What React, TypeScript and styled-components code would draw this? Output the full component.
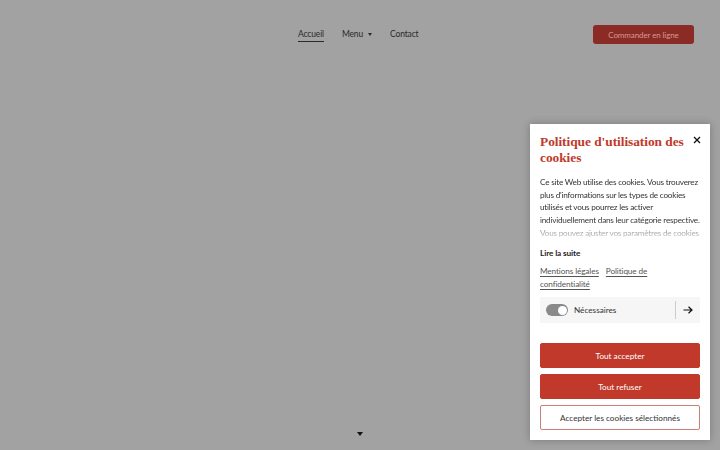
import React from "react";
import styled, { createGlobalStyle } from "styled-components";

const Global = createGlobalStyle`
  html, body { margin: 0; padding: 0; }
  body { width: 720px; height: 450px; overflow: hidden; background: #a2a2a2; }
  * { box-sizing: border-box; }
`;

const Page = styled.div`
  width: 720px;
  height: 450px;
  position: relative;
  display: flex;
  flex-direction: column;
  font-family: "Lato", "Open Sans", sans-serif;
  background: #a2a2a2;
`;

const Header = styled.header`
  display: flex;
  align-items: center;
  height: 68px;
  padding: 1px 26px 0 298px;
`;

const Nav = styled.nav`
  display: flex;
  align-items: center;
  gap: 18px;
  flex: 1;
  padding-top: 2px;
`;

const NavItem = styled.span<{ $active?: boolean }>`
  font-size: 8.5px;
  color: #2a2a2a;
  display: inline-flex;
  align-items: center;
  gap: 5px;
  padding-bottom: 2px;
  letter-spacing: -0.15px;
  border-bottom: 1px solid ${(p) => (p.$active ? "#2a2a2a" : "transparent")};
`;

const Caret = styled.span`
  width: 0;
  height: 0;
  border-left: 2.5px solid transparent;
  border-right: 2.5px solid transparent;
  border-top: 3px solid #2a2a2a;
`;

const OrderButton = styled.button`
  width: 101px;
  height: 19px;
  border: none;
  border-radius: 3px;
  background: #8b2b25;
  color: #d39a94;
  font-family: inherit;
  font-size: 8px;
  letter-spacing: -0.1px;
  padding: 0;
`;

const Hero = styled.div`
  flex: 1;
  display: flex;
  align-items: flex-end;
  justify-content: center;
  padding-bottom: 14px;
`;

const DownArrow = styled.span`
  width: 0;
  height: 0;
  border-left: 3.5px solid transparent;
  border-right: 3.5px solid transparent;
  border-top: 4px solid #111;
`;

const Panel = styled.aside`
  position: absolute;
  left: 530px;
  top: 124px;
  width: 180px;
  height: 316px;
  background: #fff;
  box-shadow: 0 0 8px rgba(0, 0, 0, 0.25);
  padding: 9px 10px 10px 10px;
  display: flex;
  flex-direction: column;
`;

const TitleRow = styled.div`
  display: flex;
  justify-content: space-between;
  align-items: flex-start;
`;

const Title = styled.h2`
  margin: 0;
  font-family: "Liberation Serif", "DejaVu Serif", serif;
  font-weight: bold;
  font-size: 13.4px;
  line-height: 16px;
  color: #c0392b;
  letter-spacing: -0.05px;
  padding-top: 1px;
`;

const Close = styled.button`
  border: none;
  background: none;
  padding: 0;
  margin: 1px -3px 0 1px;
  width: 12px;
  height: 12px;
  flex: none;
  display: flex;
  align-items: center;
  justify-content: center;
`;

const Body = styled.p`
  margin: 10px 0 0;
  font-size: 8.2px;
  letter-spacing: -0.22px;
  line-height: 12.7px;
  color: #333;
  height: 62px;
  overflow: hidden;
  -webkit-mask-image: linear-gradient(to bottom, #000 72%, rgba(0,0,0,0.2) 100%);
  mask-image: linear-gradient(to bottom, #000 72%, rgba(0,0,0,0.2) 100%);
`;

const ReadMore = styled.div`
  margin-top: 10px;
  font-size: 8.2px;
  font-weight: bold;
  color: #222;
  letter-spacing: -0.1px;
`;

const Links = styled.div`
  margin-top: 7px;
  font-size: 8.2px;
  line-height: 12.5px;
  color: #555;
  letter-spacing: -0.1px;
`;

const LinkText = styled.a`
  color: #555;
  text-decoration: underline;
  text-underline-offset: 1.5px;
  margin-right: 7px;
`;

const CatRow = styled.div`
  margin-top: 7px;
  height: 26px;
  background: #f6f6f6;
  display: flex;
  align-items: center;
  padding-left: 6px;
`;

const Toggle = styled.span`
  width: 22px;
  height: 12px;
  border-radius: 6px;
  background: #8a8a8a;
  position: relative;
  flex: none;
  &::after {
    content: "";
    position: absolute;
    right: 1.5px;
    top: 1.5px;
    width: 9px;
    height: 9px;
    border-radius: 50%;
    background: #fff;
  }
`;

const CatLabel = styled.span`
  margin-left: 6px;
  flex: 1;
  font-size: 8.2px;
  color: #333;
`;

const CatArrow = styled.span`
  width: 25px;
  height: 18px;
  border-left: 1px solid #ccc;
  display: flex;
  align-items: center;
  justify-content: center;
`;

const Buttons = styled.div`
  margin-top: auto;
  display: flex;
  flex-direction: column;
  gap: 6px;
`;

const Btn = styled.button<{ $outline?: boolean }>`
  height: 25px;
  border-radius: 2px;
  font-family: inherit;
  font-size: 8.2px;
  padding: 0;
  background: ${(p) => (p.$outline ? "#fff" : "#c0392b")};
  color: ${(p) => (p.$outline ? "#333" : "#fff")};
  border: 1px solid ${(p) => (p.$outline ? "#c97f78" : "#c0392b")};
`;

export default function App() {
  return (
    <>
      <Global />
      <Page>
        <Header>
          <Nav>
            <NavItem $active>Accueil</NavItem>
            <NavItem>
              Menu <Caret />
            </NavItem>
            <NavItem>Contact</NavItem>
          </Nav>
          <OrderButton>Commander en ligne</OrderButton>
        </Header>
        <Hero>
          <DownArrow />
        </Hero>
        <Panel>
          <TitleRow>
            <Title>Politique d'utilisation des cookies</Title>
            <Close aria-label="Fermer">
              <svg width="8" height="8" viewBox="0 0 8 8">
                <path d="M1 1 L7 7 M7 1 L1 7" stroke="#111" strokeWidth="1.3" />
              </svg>
            </Close>
          </TitleRow>
          <Body>
            Ce site Web utilise des cookies. Vous trouverez plus d'informations sur les types de cookies
            utilisés et vous pourrez les activer individuellement dans leur catégorie respective.
            Vous pouvez ajuster vos paramètres de cookies à tout moment.
          </Body>
          <ReadMore>Lire la suite</ReadMore>
          <Links>
            <LinkText>Mentions légales</LinkText>
            <LinkText>Politique de confidentialité</LinkText>
          </Links>
          <CatRow>
            <Toggle />
            <CatLabel>Nécessaires</CatLabel>
            <CatArrow>
              <svg width="10" height="8" viewBox="0 0 10 8">
                <path d="M0.5 4 H9 M5.5 0.7 L9 4 L5.5 7.3" stroke="#111" strokeWidth="1.2" fill="none" />
              </svg>
            </CatArrow>
          </CatRow>
          <Buttons>
            <Btn>Tout accepter</Btn>
            <Btn>Tout refuser</Btn>
            <Btn $outline>Accepter les cookies sélectionnés</Btn>
          </Buttons>
        </Panel>
      </Page>
    </>
  );
}
